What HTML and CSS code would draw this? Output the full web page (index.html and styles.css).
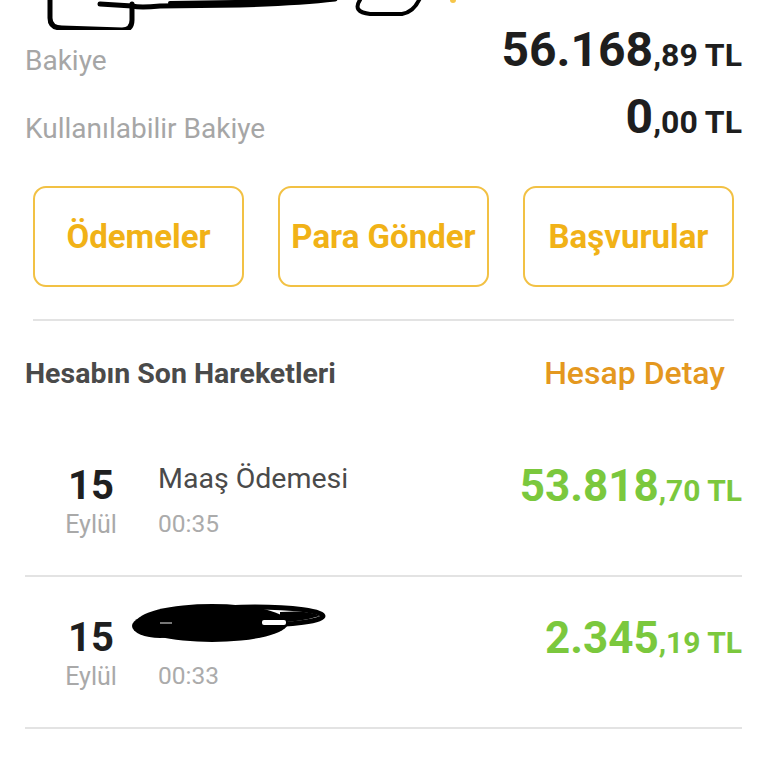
FILE: index.html
```html
<!DOCTYPE html>
<html lang="tr">
<head>
    <meta charset="UTF-8">
    <meta name="viewport" content="width=device-width, initial-scale=1.0">
    <title>Hesap</title>
    <link rel="stylesheet" href="styles.css">
</head>
<body>
    <div class="masked-top">
        <svg width="768" height="32" viewBox="0 0 768 32">
            <path d="M50 -2 L50 18 Q50 28 62 28 L122 30 Q132 30 132 20 L132 4" fill="none" stroke="#000" stroke-width="5" stroke-linecap="round"/>
            <path d="M100 4 L132 6 Q140 8 160 6 L240 5 Q300 3 335 -1" fill="none" stroke="#000" stroke-width="5" stroke-linecap="round"/>
            <path d="M170 3 L300 1" fill="none" stroke="#000" stroke-width="4" stroke-linecap="round"/>
            <path d="M360 0 Q352 12 370 14 L402 14 Q414 12 420 -2" fill="none" stroke="#000" stroke-width="4" stroke-linecap="round"/>
            <circle cx="453" cy="0" r="3" fill="#f6c64a"/>
        </svg>
    </div>

    <div class="balance">
        <div class="balance-row">
            <span class="balance-label">Bakiye</span>
            <span class="amount">56.168<small>,89 TL</small></span>
        </div>
        <div class="balance-row">
            <span class="balance-label">Kullanılabilir Bakiye</span>
            <span class="amount">0<small>,00 TL</small></span>
        </div>
    </div>

    <div class="actions">
        <button class="action">Ödemeler</button>
        <button class="action">Para Gönder</button>
        <button class="action">Başvurular</button>
    </div>

    <hr class="divider">

    <div class="section-head">
        <h2>Hesabın Son Hareketleri</h2>
        <a class="detail-link" href="#">Hesap Detay</a>
    </div>

    <div class="movements">
        <div class="movement">
            <div class="date">
                <span class="day">15</span>
                <span class="month">Eylül</span>
            </div>
            <div class="info">
                <span class="title">Maaş Ödemesi</span>
                <span class="time">00:35</span>
            </div>
            <span class="amount plus">53.818<small>,70 TL</small></span>
        </div>
        <div class="movement">
            <div class="date">
                <span class="day">15</span>
                <span class="month">Eylül</span>
            </div>
            <div class="info">
                <span class="title masked">
                    <svg width="200" height="46" viewBox="0 0 200 46">
                        <ellipse cx="82" cy="23" rx="76" ry="19" fill="#000"/>
                        <ellipse cx="30" cy="26" rx="28" ry="12" fill="#000"/>
                        <ellipse cx="125" cy="16" rx="68" ry="9" fill="none" stroke="#000" stroke-width="5"/>
                        <path d="M150 12 Q180 10 190 16 Q170 22 150 22 Z" fill="#000"/>
                        <rect x="132" y="20" width="24" height="5" rx="2" fill="#fff"/>
                        <rect x="30" y="22" width="12" height="2" fill="#777"/>
                    </svg>
                </span>
                <span class="time">00:33</span>
            </div>
            <span class="amount plus">2.345<small>,19 TL</small></span>
        </div>
    </div>
</body>
</html>
```

FILE: styles.css
```css
body {
    margin: 0;
    font-family: Roboto, "Noto Sans", sans-serif;
    background-color: #ffffff;
    color: #1f1f1f;
}

.masked-top {
    height: 30px;
    overflow: hidden;
}

.masked-top svg {
    display: block;
}

.balance {
    padding: 0 26px 0 25px;
}

.balance-row {
    display: flex;
    justify-content: space-between;
    align-items: flex-end;
    height: 47px;
}

.balance-row + .balance-row {
    margin-top: 21px;
}

.balance-label {
    font-size: 28px;
    color: #a6a6a6;
}

.amount {
    font-size: 48px;
    font-weight: 700;
    color: #1e1e1e;
    line-height: 1;
    margin-bottom: 3px;
    white-space: nowrap;
}

.balance-row + .balance-row .amount {
    margin-bottom: 4px;
}

.amount small {
    font-size: 32px;
}

.actions {
    display: grid;
    grid-template-columns: repeat(3, 1fr);
    gap: 34px;
    padding: 0 34px 0 33px;
    margin-top: 41px;
}

.action {
    height: 101px;
    background: #ffffff;
    border: 2px solid #f2c144;
    border-radius: 13px;
    color: #f1b217;
    font-family: Roboto, sans-serif;
    font-size: 33px;
    font-weight: 700;
    padding: 0;
    white-space: nowrap;
}

.divider {
    border: none;
    border-top: 2px solid #e3e3e3;
    margin: 32px 34px 0 33px;
}

.section-head {
    display: flex;
    justify-content: space-between;
    align-items: center;
    padding: 0 43px 0 25px;
    height: 104px;
}

.section-head h2 {
    margin: 0;
    font-size: 28.5px;
    font-weight: 700;
    color: #4a4a4a;
}

.detail-link {
    font-size: 32px;
    font-weight: 500;
    color: #e4981f;
    text-decoration: none;
}

.movements {
    margin: 0 26px 0 25px;
}

.movement {
    display: flex;
    align-items: flex-start;
    height: 152px;
    border-bottom: 2px solid #e3e3e3;
    box-sizing: border-box;
    padding-top: 37px;
}

.date {
    display: flex;
    flex-direction: column;
    align-items: center;
    width: 130px;
    margin-left: 1px;
}

.day {
    font-size: 40px;
    font-weight: 700;
    color: #1f1f1f;
    line-height: 48px;
}

.month {
    font-size: 25px;
    line-height: 30px;
    color: #a9a9a9;
}

.info {
    display: flex;
    flex-direction: column;
    margin-left: 2px;
    flex: 1;
}

.title {
    font-size: 28.5px;
    color: #4a4a4a;
    height: 34px;
    line-height: 34px;
}

.title.masked svg {
    display: block;
    margin: -14px 0 0 -28px;
}

.time {
    font-size: 24.5px;
    line-height: 30px;
    color: #ababab;
    margin-top: 13px;
}

.amount.plus {
    font-size: 44px;
    color: #7bc83d;
    margin: 2px 0 0;
}

.amount.plus small {
    font-size: 30px;
}
```
